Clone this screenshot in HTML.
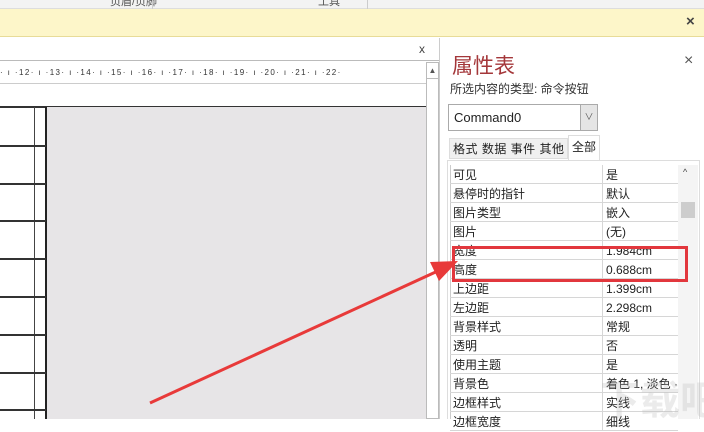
<!DOCTYPE html>
<html><head><meta charset="utf-8"><style>
*{margin:0;padding:0;box-sizing:border-box}
body{width:704px;height:419px;overflow:hidden;position:relative;background:#fff;font-family:"Liberation Sans","Noto Sans CJK SC",sans-serif;font-size:12px;color:#222}
.a{position:absolute}
.row{position:absolute;left:450px;width:228px;height:19px;border-bottom:1px solid #d6d6d6;font-size:12px;line-height:20px}
.row span{position:absolute;top:0}
.row .k{left:3px}.row .v{left:156px}
.row:after{content:"";position:absolute;left:152px;top:0;width:1px;height:19px;background:#d6d6d6}
.hl{position:absolute;left:0;width:46px;height:2px;background:#333}
</style></head><body>
<div class="a" style="left:0;top:0;width:704px;height:9px;background:#f3f3f3;border-bottom:1px solid #ddd"></div>
<div class="a" style="left:110px;top:-7px;width:74px;font-size:11px;color:#555">页眉/页脚</div>
<div class="a" style="left:318px;top:-7px;font-size:11px;color:#555">工具</div>
<div class="a" style="left:152px;top:0;width:1px;height:9px;background:#ccc"></div>
<div class="a" style="left:367px;top:0;width:1px;height:9px;background:#ccc"></div>
<div class="a" style="left:0;top:9px;width:704px;height:28px;background:#fdf6c9;border-bottom:1px solid #e8dc98"></div>
<div class="a" style="left:686px;top:13px;font-size:15px;font-weight:bold;color:#444">×</div>
<div class="a" style="left:0;top:38px;width:440px;height:23px;background:#fff;border-bottom:1px solid #bbb"></div>
<div class="a" style="left:419px;top:42px;font-size:12px;color:#444">x</div>
<div class="a" style="left:0;top:62px;width:426px;height:22px;background:#fff;border-bottom:1px solid #ccc;font-size:8px;line-height:22px;color:#333;white-space:nowrap;letter-spacing:1.4px">· ı ·12· ı ·13· ı ·14· ı ·15· ı ·16· ı ·17· ı ·18· ı ·19· ı ·20· ı ·21· ı ·22·</div>
<div class="a" style="left:0;top:85px;width:426px;height:22px;background:#fff"></div>
<div class="a" style="left:0;top:106px;width:426px;height:2px;background:#333"></div>
<div class="a" style="left:46px;top:107px;width:380px;height:312px;background:#e7e5e7"></div>
<div class="a" style="left:34px;top:107px;width:1px;height:312px;background:#444"></div>
<div class="a" style="left:45px;top:107px;width:2px;height:312px;background:#222"></div>
<div class="hl" style="top:145px"></div><div class="hl" style="top:183px"></div><div class="hl" style="top:220px"></div><div class="hl" style="top:258px"></div><div class="hl" style="top:296px"></div><div class="hl" style="top:334px"></div><div class="hl" style="top:372px"></div><div class="hl" style="top:409px"></div>
<div class="a" style="left:426px;top:62px;width:13px;height:357px;background:#fff;border:1px solid #bbb"></div>
<div class="a" style="left:426px;top:62px;width:13px;height:17px;border:1px solid #bbb;font-size:8px;text-align:center;line-height:15px;color:#555">▲</div>
<div class="a" style="left:439px;top:38px;width:1px;height:381px;background:#ccc"></div>
<div class="a" style="left:452px;top:50px;font-size:21px;color:#a4373a">属性表</div>
<div class="a" style="left:684px;top:52px;font-size:16px;color:#555">×</div>
<div class="a" style="left:450px;top:80px;font-size:12px;color:#333">所选内容的类型: 命令按钮</div>
<div class="a" style="left:448px;top:104px;width:150px;height:27px;border:1px solid #aaa;background:#fff;font-size:13px;line-height:25px;padding-left:5px">Command0</div>
<div class="a" style="left:580px;top:105px;width:17px;height:25px;background:#e5e5e5;border-left:1px solid #aaa;font-size:9px;text-align:center;line-height:25px;color:#555">∨</div>
<div class="a" style="left:449px;top:138px;width:119px;height:21px;background:#f0f0f0;border:1px solid #ddd;font-size:12px;line-height:20px;padding-left:3px;letter-spacing:0.5px">格式 数据 事件 其他</div>
<div class="a" style="left:568px;top:135px;width:32px;height:26px;background:#fff;border:1px solid #ddd;border-bottom:none;font-size:12px;line-height:22px;text-align:center">全部</div>
<div class="a" style="left:447px;top:160px;width:253px;height:259px;border:1px solid #ddd;border-bottom:none"></div>
<div class="a" style="left:450px;top:165px;width:1px;height:254px;background:#ccc"></div>
<div class="a" style="left:678px;top:165px;width:20px;height:254px;background:#f4f4f4"></div>
<div class="a" style="left:683px;top:167px;font-size:9px;color:#444">^</div>
<div class="a" style="left:681px;top:202px;width:14px;height:16px;background:#cdcdcd"></div>
<div class="row" style="top:165px"><span class="k">可见</span><span class="v">是</span></div>
<div class="row" style="top:184px"><span class="k">悬停时的指针</span><span class="v">默认</span></div>
<div class="row" style="top:203px"><span class="k">图片类型</span><span class="v">嵌入</span></div>
<div class="row" style="top:222px"><span class="k">图片</span><span class="v">(无)</span></div>
<div class="row" style="top:241px"><span class="k">宽度</span><span class="v">1.984cm</span></div>
<div class="row" style="top:260px"><span class="k">高度</span><span class="v">0.688cm</span></div>
<div class="row" style="top:279px"><span class="k">上边距</span><span class="v">1.399cm</span></div>
<div class="row" style="top:298px"><span class="k">左边距</span><span class="v">2.298cm</span></div>
<div class="row" style="top:317px"><span class="k">背景样式</span><span class="v">常规</span></div>
<div class="row" style="top:336px"><span class="k">透明</span><span class="v">否</span></div>
<div class="row" style="top:355px"><span class="k">使用主题</span><span class="v">是</span></div>
<div class="row" style="top:374px"><span class="k">背景色</span><span class="v">着色 1, 淡色 ·</span></div>
<div class="row" style="top:393px"><span class="k">边框样式</span><span class="v">实线</span></div>
<div class="row" style="top:412px"><span class="k">边框宽度</span><span class="v">细线</span></div>
<div class="a" style="left:452px;top:246px;width:236px;height:36px;border:3px solid #e2373d"></div>
<svg class="a" style="left:0;top:0" width="704" height="419"><line x1="150" y1="403" x2="440" y2="270" stroke="#e83a3a" stroke-width="3"/><polygon points="458,261 439,281 430,262" fill="#e83a3a"/></svg>
<div class="a" style="left:600px;top:368px;font-size:40px;color:rgba(190,190,190,0.3);font-weight:bold;white-space:nowrap">下载吧</div>
</body></html>
